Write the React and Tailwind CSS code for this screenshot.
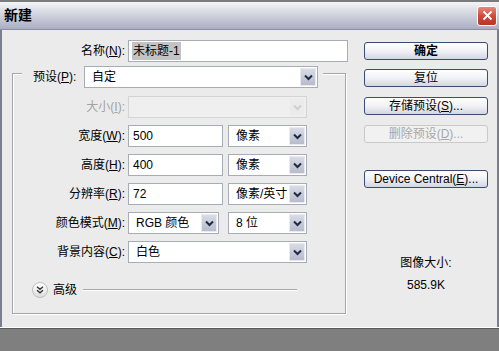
import clsx from "clsx";

const Chevron = ({ disabled }) => (
  <svg width="9" height="7" viewBox="0 0 9 7">
    <path
      d="M1 1.5 L4.5 5 L8 1.5"
      fill="none"
      stroke={disabled ? "#cfcfcf" : "#1f2a44"}
      strokeWidth="2"
    />
  </svg>
);

const Select = ({ value, className, disabled }) => (
  <div
    className={clsx(
      "flex h-[22px] items-center border",
      disabled ? "border-[#d4d4d4] bg-[#efefef]" : "border-[#a7acb6] bg-white",
      className
    )}
  >
    <span className="pl-[7px] whitespace-nowrap">{value}</span>
    <div
      className={clsx(
        "ml-auto mr-[1px] flex h-[18px] w-[16px] shrink-0 items-center justify-center border",
        disabled
          ? "border-[#eeeeee] bg-[#ebebeb]"
          : "border-[#e8eaf0] bg-gradient-to-b from-[#d9dce6] to-[#b7bbcc]"
      )}
    >
      <Chevron disabled={disabled} />
    </div>
  </div>
);

const Input = ({ value, className }) => (
  <div
    className={clsx(
      "flex h-[22px] items-center border border-[#a7acb6] bg-white pl-[4px]",
      className
    )}
  >
    {value}
  </div>
);

const Label = ({ text, u, disabled, className }) => (
  <div
    className={clsx(
      "text-right whitespace-nowrap",
      disabled && "text-[#a3a3a3]",
      className
    )}
  >
    {text}(<u>{u}</u>):
  </div>
);

const Btn = ({ children, disabled, bold, className }) => (
  <div
    className={clsx(
      "flex h-[18px] w-[124px] items-center justify-center rounded-[3px] border whitespace-nowrap",
      disabled
        ? "border-[#c9c9c9] bg-[#f1f1f1] text-[#a8a8a8]"
        : "border-[#3b4d72] bg-gradient-to-b from-[#ffffff] via-[#f1f2f6] to-[#d3d6e2] text-black",
      bold && "font-bold",
      className
    )}
  >
    {children}
  </div>
);

const rows = [
  { label: "宽度", u: "W", value: "500", unit: "像素" },
  { label: "高度", u: "H", value: "400", unit: "像素" },
  { label: "分辨率", u: "R", value: "72", unit: "像素/英寸" },
];

export default function App() {
  return (
    <div className="w-[499px] h-[351px] overflow-hidden bg-[#7f7f7f] text-[12px] text-black font-['Liberation_Sans','Noto_Sans_CJK_SC',sans-serif]">
      <div className="h-[2px] bg-[#7b7b7b]" />

      {/* title bar */}
      <div className="flex h-[28px] items-center border-b border-[#8a8fa3] bg-gradient-to-b from-[#f4f5f8] via-[#cfd1dc] to-[#aaaec1] pl-[4px] pr-[2px]">
        <span className="text-[14px] font-bold tracking-[0px]">新建</span>
        <div className="ml-auto flex h-[20px] w-[20px] items-center justify-center rounded-[3px] border border-white bg-gradient-to-b from-[#e58a7c] via-[#cf4a3a] to-[#b83626]">
          <svg width="11" height="11" viewBox="0 0 11 11">
            <path d="M1.5 1.5 L9.5 9.5 M9.5 1.5 L1.5 9.5" stroke="#fff" strokeWidth="1.8" />
          </svg>
        </div>
      </div>

      {/* body */}
      <div className="flex h-[297px] border-x-2 border-[#7a7e90] bg-[#ebebeb]">
        <div className="w-[348px] pt-[10px]">
          <div className="flex items-center">
            <Label text="名称" u="N" className="w-[123px]" />
            <div className="ml-[3px] flex h-[22px] w-[220px] items-center border border-[#a7acb6] bg-white pl-[3px]">
              <span className="bg-[#c3c3c3] px-[1px]">未标题-1</span>
            </div>
          </div>

          {/* group box */}
          <div className="ml-[10px] mt-[11px] w-[334px] border border-[#a6a6a6] pb-[15px] shadow-[inset_1px_1px_0_#ffffff,1px_1px_0_#ffffff]">
            <div className="-mt-[8px] ml-[9px] flex w-[301px] items-center bg-[#ebebeb] pl-[11px] pr-[5px]">
              <div className="w-[48px] whitespace-nowrap">
                预设(<u>P</u>):
              </div>
              <Select value="自定" className="ml-[3px] w-[234px]" />
            </div>

            <div className="mt-[8px] flex flex-col gap-[7px]">
              <div className="flex items-center">
                <Label text="大小" u="I" disabled className="w-[112px]" />
                <Select value="" disabled className="ml-[3px] w-[179px]" />
              </div>

              {rows.map((r) => (
                <div key={r.u} className="flex items-center">
                  <Label text={r.label} u={r.u} className="w-[112px]" />
                  <Input value={r.value} className="ml-[3px] w-[95px]" />
                  <Select value={r.unit} className="ml-[5px] w-[79px]" />
                </div>
              ))}

              <div className="flex items-center">
                <Label text="颜色模式" u="M" className="w-[112px]" />
                <Select value="RGB 颜色" className="ml-[3px] w-[91px]" />
                <Select value="8 位" className="ml-[9px] w-[79px]" />
              </div>

              <div className="flex items-center">
                <Label text="背景内容" u="C" className="w-[112px]" />
                <Select value="白色" className="ml-[3px] w-[179px]" />
              </div>
            </div>

            <div className="ml-[19px] mt-[19px] flex h-[16px] items-center">
              <div className="flex h-[16px] w-[16px] items-center justify-center rounded-full border border-[#bdbdbd] bg-gradient-to-b from-[#ffffff] to-[#dedede]">
                <svg width="8" height="8" viewBox="0 0 8 8">
                  <path d="M1 0.8 L4 3.3 L7 0.8 M1 4.3 L4 6.8 L7 4.3" fill="none" stroke="#333" strokeWidth="1.3" />
                </svg>
              </div>
              <span className="ml-[5px]">高级</span>
              <div className="ml-[6px] h-[2px] w-[214px] border-t border-[#a8a8a8] border-b border-b-white" />
            </div>
          </div>
        </div>

        {/* buttons */}
        <div className="flex flex-col items-center pl-[14px] pt-[12px] w-[138px]">
          <Btn bold className="font-semibold">确定</Btn>
          <Btn className="mt-[9px]">复位</Btn>
          <Btn className="mt-[10px]">
            存储预设(<u>S</u>)...
          </Btn>
          <Btn disabled className="mt-[10px]">
            删除预设(<u>D</u>)...
          </Btn>
          <Btn className="mt-[27px]">
            Device Central(<u>E</u>)...
          </Btn>
          <div className="mt-[68px] leading-[14px]">图像大小:</div>
          <div className="mt-[8px] leading-[14px]">585.9K</div>
        </div>
      </div>
      <div className="h-[1px] bg-white" />
      <div className="h-[1px] bg-[#5a5a5a]" />
    </div>
  );
}
